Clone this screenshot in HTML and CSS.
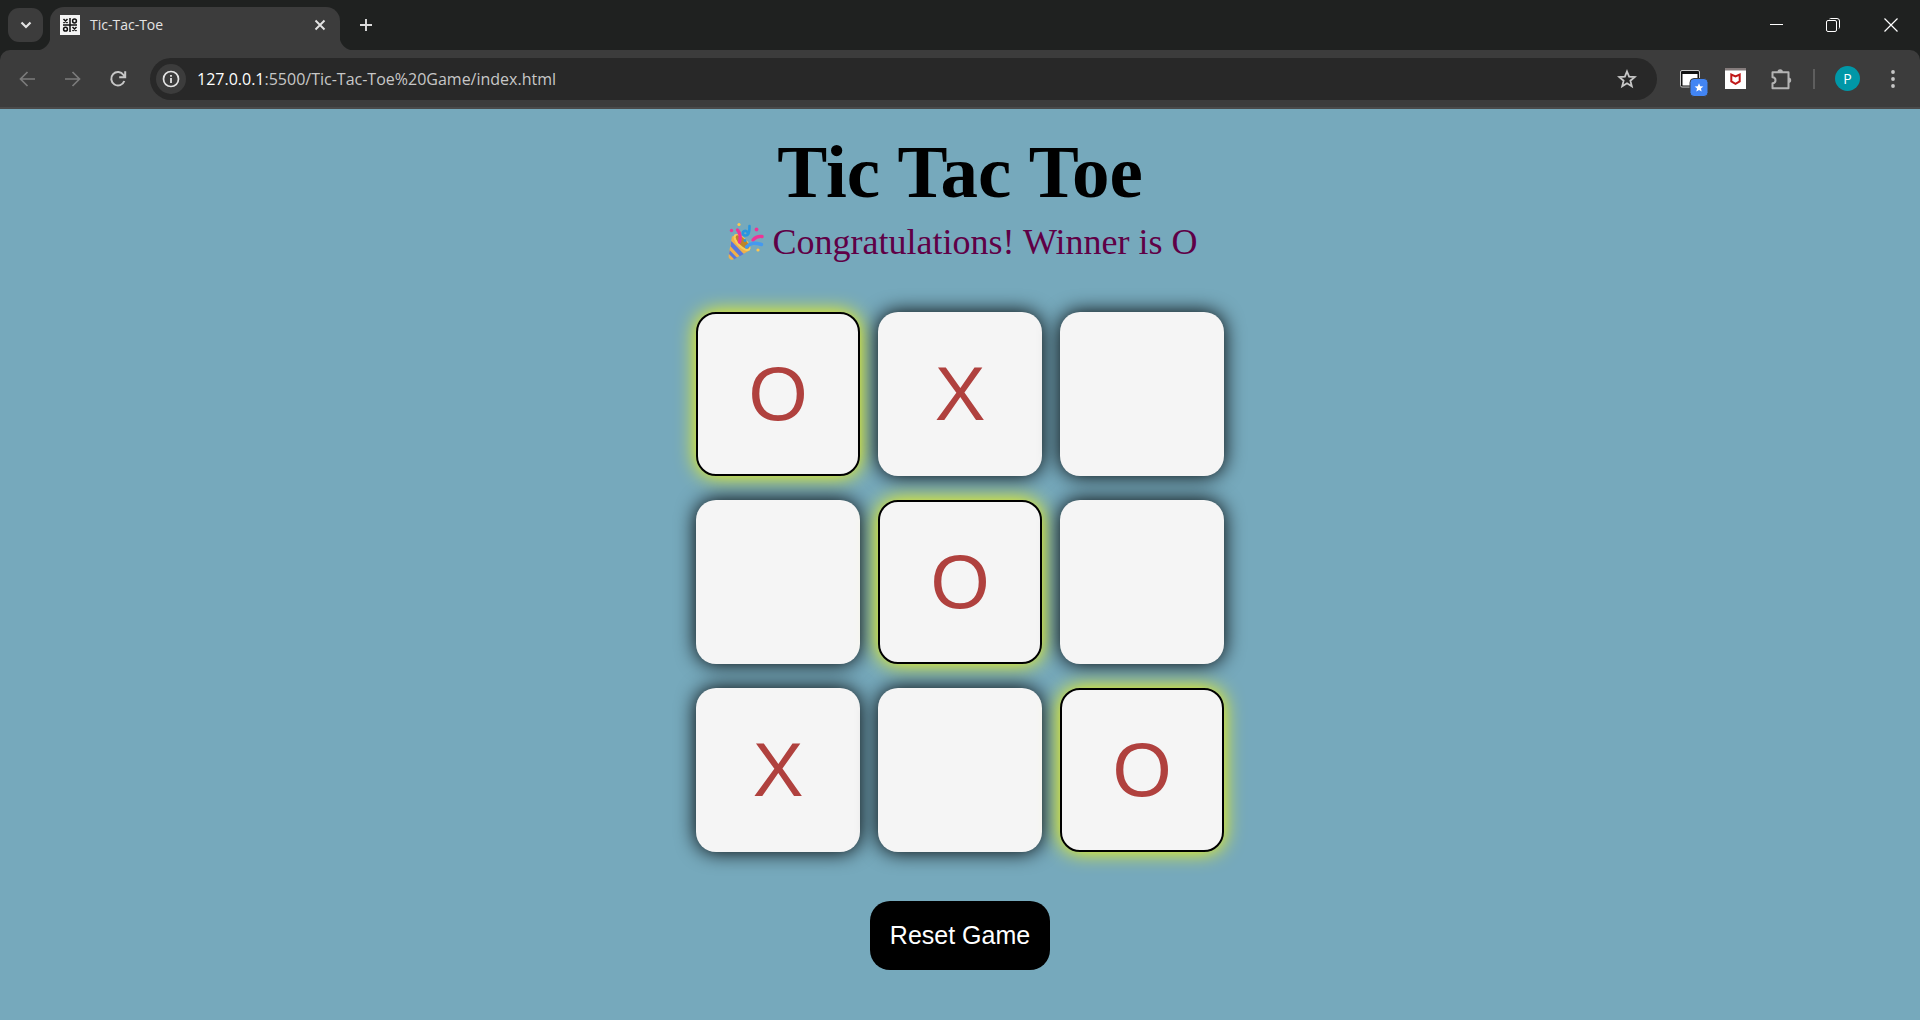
FILE: index.html
```html
<!DOCTYPE html>
<html lang="en">
<head>
  <meta charset="utf-8">
  <meta name="viewport" content="width=device-width, initial-scale=1">
  <title>Tic-Tac-Toe</title>
  <link rel="stylesheet" href="styles.css">
</head>
<body>
  <header class="browser">
    <div class="tab-strip">
      <button class="tab-search" aria-label="Search tabs">
        <svg width="12" height="8" viewBox="0 0 12 8"><path d="M1.500 1.500 6 6l4.500-4.500" fill="none" stroke="#e3e3e3" stroke-width="2.200"/></svg>
      </button>
      <div class="tab">
        <svg class="favicon" width="20" height="20" viewBox="0 0 20 20">
          <path fill="#f4f4f4" d="M0 0h20v20H0z"/>
          <g fill="none" stroke="#111" stroke-width="1.500">
            <path d="M10 3v14M3 10h14M3.500 4l4 4m0-4-4 4M12.500 12l4 4m0-4-4 4"/>
            <circle cx="14.500" cy="6" r="1.900"/><circle cx="5.500" cy="14.200" r="1.900"/>
          </g>
        </svg>
        <span class="tab-title">Tic-Tac-Toe</span>
        <button class="tab-close" aria-label="Close tab">
          <svg width="12" height="12" viewBox="0 0 12 12"><path d="m1.500 1.500 9 9m0-9-9 9" stroke="#e3e3e3" stroke-width="1.900"/></svg>
        </button>
      </div>
      <button class="new-tab" aria-label="New tab">
        <svg width="14" height="14" viewBox="0 0 14 14"><path d="M7 1v12M1 7h12" stroke="#dcdcdc" stroke-width="1.900"/></svg>
      </button>
      <div class="window-controls">
        <button class="window-button" aria-label="Minimize">
          <svg width="16" height="14" viewBox="0 0 16 14"><path d="M3 6.500h13" stroke="#fff"/></svg>
        </button>
        <button class="window-button" aria-label="Restore">
          <svg width="14" height="14" viewBox="0 0 14 14" fill="none" stroke="#fff"><rect x=".5" y="2.500" width="10" height="11" rx="1.500"/><path d="M3.500 1q.3-.5 1-.5H11q2.500 0 2.500 2.500v6.500q0 .7-.5 1"/></svg>
        </button>
        <button class="window-button" aria-label="Close">
          <svg width="14" height="14" viewBox="0 0 14 14"><path d="m.5.5 13 13m0-13-13 13" stroke="#fff" stroke-width="1.200"/></svg>
        </button>
      </div>
    </div>

    <div class="toolbar">
      <button class="tool" aria-label="Back">
        <svg width="18" height="18" viewBox="0 0 18 18" fill="none" stroke="#7b7b7b" stroke-width="1.700"><path d="M16 9H2M8.500 2 1.500 9l7 7"/></svg>
      </button>
      <button class="tool" aria-label="Forward">
        <svg width="18" height="18" viewBox="0 0 18 18" fill="none" stroke="#7b7b7b" stroke-width="1.700"><path d="M1 9h14M8.500 2l7 7-7 7"/></svg>
      </button>
      <button class="tool" aria-label="Reload">
        <svg width="18" height="18" viewBox="0 0 18 18" fill="none" stroke="#c7c7c7" stroke-width="2"><path d="M15.300 11A6.700 6.700 0 1 1 14.500 5L16 6.800M16.200 1.300v6h-6"/></svg>
      </button>
      <div class="address">
        <button class="site-info" aria-label="View site information">
          <svg width="18" height="18" viewBox="0 0 18 18"><circle cx="9" cy="9" r="7.500" fill="none" stroke="#e3e3e3" stroke-width="1.700"/><path d="M8.100 8h1.800v5H8.100zM8.100 5h1.800v1.800H8.100z" fill="#e3e3e3"/></svg>
        </button>
        <div class="url"><span class="host">127.0.0.1</span>:5500/Tic-Tac-Toe%20Game/index.html</div>
        <button class="bookmark" aria-label="Bookmark this tab">
          <svg width="20" height="20" viewBox="0 0 20 20"><path d="m10 2.500 2.100 5.200 5.600.4-4.300 3.600 1.400 5.500L10 14.200l-4.800 3 1.400-5.500L2.300 8.100l5.600-.4z" fill="none" stroke="#c7c7c7" stroke-width="1.800"/></svg>
        </button>
      </div>
      <button class="tool" aria-label="Side panel extension">
        <svg class="panel-icon" width="30" height="28" viewBox="0 0 30 28">
          <rect x="1.500" y="1.500" width="19" height="16.500" rx="1.500" fill="#111" stroke="#c9c9c9"/>
          <path d="M3.500 5h15v11.500h-15z" fill="#fff"/>
          <rect x="11" y="9.500" width="18" height="18" rx="4" fill="#4285f4" stroke="#3c3c3c"/>
          <path d="m20 14.200 1.200 3 3.200.2-2.500 2 .8 3.200-2.700-1.700-2.700 1.700.8-3.200-2.500-2 3.200-.2z" fill="#fff"/>
        </svg>
      </button>
      <button class="tool" aria-label="Shield extension">
        <svg width="21" height="21" viewBox="0 0 21 21"><path fill="#fff" d="M0 0h21v21H0z"/><path fill="#857c7c" d="M0 0h21v2.500H0z"/><path d="M6.300 6.500v7l4.200 2.300 4.200-2.300v-7l-4.200 2z" fill="none" stroke="#c01818" stroke-width="2"/></svg>
      </button>
      <button class="tool" aria-label="Extensions">
        <svg width="22" height="22" viewBox="0 0 22 22"><path d="M2.500 4.200h16v16h-16v-5q3-.2 3-3t-3-3z" fill="none" stroke="#b4b4b4" stroke-width="2" stroke-linejoin="round"/><path d="M7.500 4a2.700 2.700 0 0 1 5.400 0zM18.500 9.500a2.700 2.700 0 0 1 0 5.400z" fill="#b4b4b4"/></svg>
      </button>
      <span class="divider"></span>
      <button class="tool" aria-label="Profile"><span class="avatar">P</span></button>
      <button class="tool" aria-label="Menu">
        <svg width="4" height="18" viewBox="0 0 4 18" fill="#c7c7c7"><circle cx="2" cy="2" r="1.900"/><circle cx="2" cy="9" r="1.900"/><circle cx="2" cy="16" r="1.900"/></svg>
      </button>
    </div>
  </header>

  <main class="page">
    <h1 class="title">Tic Tac Toe</h1>
    <p class="message">
      <svg class="party" width="42" height="40" viewBox="0 -1 42 40" role="img" aria-label="Party popper">
        <path d="M6.500 36.500c-1.500-1-.8-3 .1-9L9 14.500l4-1 14.500 13-1 2L10 37.500c-1.500.7-2.700 0-3.500-1z" fill="#f0b04a"/>
        <path d="m8.300 19 12.500 13-4 2.300-9.300-10zM6.700 28.300l7.300 7.500-2.800 1.500L6 32z" fill="#5878dc"/>
        <ellipse cx="19" cy="20.500" rx="11" ry="5" transform="rotate(45 19 20.500)" fill="#f8cc5c"/>
        <ellipse cx="19.500" cy="20" rx="9" ry="3.500" transform="rotate(45 19.500 20)" fill="#bd842a"/>
        <g fill="none" stroke-width="3.400" stroke-linecap="round">
          <path d="M16.500 20c1.500-5 .6-9-2-12" stroke="#ed3596"/>
          <path d="M26.500 4c0 8-1.500 10-4.500 9.500-4-1-2-5.500 1-4.500 2 .7 2 2.500 1.300 4" stroke="#2996df" stroke-width="2.600"/>
          <path d="M30 18c2.500-3 5-4 9-3.500" stroke="#ed3596"/>
          <path d="M23.500 25c4-4.500 8-4.500 15-2.500" stroke="#4499f0"/>
        </g>
        <g fill="#ed3596"><circle cx="8.500" cy="8.500" r="1.700"/><circle cx="33.500" cy="7.500" r="1.900"/></g>
        <g fill="#ffc64d"><circle cx="16" cy="2.500" r="1.600"/><circle cx="35" cy="28" r="1.600"/></g>
        <circle cx="22" cy="18.500" r="1.500" fill="#2996df"/>
      </svg>
      Congratulations! Winner is O
    </p>
    <div class="board">
      <button class="box win">O</button>
      <button class="box">X</button>
      <button class="box" aria-label="Empty"></button>
      <button class="box" aria-label="Empty"></button>
      <button class="box win">O</button>
      <button class="box" aria-label="Empty"></button>
      <button class="box">X</button>
      <button class="box" aria-label="Empty"></button>
      <button class="box win">O</button>
    </div>
    <button class="reset">Reset Game</button>
  </main>
</body>
</html>
```
FILE: styles.css
```css
* {
  box-sizing: border-box;
}

body {
  margin: 0;
  min-height: 100vh;
  display: flex;
  flex-direction: column;
  background: #76a9bc;
}

button {
  border: 0;
  padding: 0;
  background: none;
  font-family: inherit;
}

svg {
  display: block;
}

/* Browser frame */
.browser {
  background: #1f2120;
  font-family: "Open Sans", "Noto Sans", sans-serif;
}

.tab-strip {
  display: flex;
  height: 50px;
  padding-left: 8px;
}

.tab-search {
  width: 35px;
  height: 34px;
  margin-top: 8px;
  border-radius: 11px;
  background: #3c3c3c;
  display: grid;
  place-items: center;
}

.tab {
  position: relative;
  display: flex;
  align-items: center;
  width: 290px;
  margin: 7px 0 0 7px;
  padding: 0 14px 8px 10px;
  border-radius: 14px 14px 0 0;
  background: #3c3c3c;
}

.tab::before,
.tab::after {
  content: "";
  position: absolute;
  bottom: 0;
  width: 14px;
  height: 14px;
}

.tab::before {
  right: 100%;
  background: radial-gradient(circle at 0 0, transparent 14px, #3c3c3c 15px);
}

.tab::after {
  left: 100%;
  background: radial-gradient(circle at 100% 0, transparent 14px, #3c3c3c 15px);
}

.tab-title {
  flex: 1;
  margin-left: 10px;
  font-size: 14px;
  line-height: 20px;
  color: #e3e3e3;
}

.new-tab {
  width: 34px;
  height: 34px;
  margin: 8px 0 0 9px;
  display: grid;
  place-items: center;
}

.window-controls {
  display: flex;
  margin-left: auto;
}

.window-button {
  width: 58px;
  height: 49px;
  display: grid;
  place-items: center;
}

.toolbar {
  display: flex;
  align-items: center;
  height: 59px;
  padding: 0 5px;
  border-bottom: 2px solid #4a4a4a;
  border-radius: 10px 10px 0 0;
  background: #3c3c3c;
}

.tool {
  flex: none;
  width: 45px;
  height: 45px;
  display: grid;
  place-items: center;
}

.address {
  flex: 1;
  display: flex;
  align-items: center;
  height: 42px;
  margin: 0 11px 0 10px;
  padding: 0 20px 0 6px;
  border-radius: 21px;
  background: #282828;
}

.site-info {
  width: 30px;
  height: 30px;
  border-radius: 50%;
  background: #3c3c3c;
  display: grid;
  place-items: center;
}

.url {
  flex: 1;
  margin-left: 11px;
  font-size: 16px;
  line-height: 24px;
  color: #c7c7c7;
}

.host {
  color: #fff;
}

.panel-icon {
  margin: 8px 0 0 6px;
}

.divider {
  width: 2px;
  height: 20px;
  margin: 0 10px;
  background: #5e5e5e;
}

.avatar {
  width: 25px;
  height: 25px;
  border-radius: 50%;
  background: #0097a7;
  color: #fff;
  font-size: 14px;
  line-height: 25px;
  text-align: center;
}

/* Game */
.page {
  display: flex;
  flex-direction: column;
  align-items: center;
  padding: 19px 20px 48px;
  font-family: "Liberation Serif", serif;
}

.title {
  margin: 0;
  font-size: 75px;
  line-height: 88px;
  color: #000;
}

.message {
  display: flex;
  gap: 8px;
  margin: 5px 0 0;
  font-size: 36px;
  line-height: 42px;
  color: #5f0046;
}

.board {
  display: grid;
  grid-template-columns: repeat(3, 164px);
  gap: 24px 18px;
  margin: 49px 0;
}

.box {
  height: 164px;
  padding-bottom: 2px;
  border-radius: 20px;
  background: #f5f5f5;
  box-shadow: 0 0 20px #000;
  color: #b0413e;
  font-family: "Liberation Sans", sans-serif;
  font-size: 76px;
}

.win {
  border: 2px solid #000;
  box-shadow: 0 0 20px #ff0;
}

.reset {
  padding: 20px;
  border-radius: 20px;
  background: #000;
  color: #fff;
  font-family: "Liberation Sans", sans-serif;
  font-size: 25px;
  line-height: 29px;
}
```
